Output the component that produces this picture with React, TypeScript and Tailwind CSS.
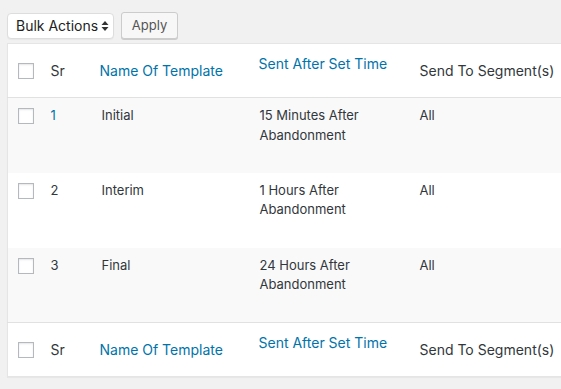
import React from 'react';

const font = { fontFamily: 'Inter, "Liberation Sans", sans-serif' };

interface TemplateRow {
    sr: string;
    name: string;
    sent: [string, string];
    segment: string;
}

const rows: TemplateRow[] = [
    { sr: '1', name: 'Initial', sent: ['15 Minutes After', 'Abandonment'], segment: 'All' },
    { sr: '2', name: 'Interim', sent: ['1 Hours After', 'Abandonment'], segment: 'All' },
    { sr: '3', name: 'Final', sent: ['24 Hours After', 'Abandonment'], segment: 'All' },
];

function Checkbox() {
    return (
        <span className="block w-[16px] h-[16px] bg-white border border-[#b4b9be] shadow-[inset_0_1px_2px_rgba(0,0,0,0.1)]" />
    );
}

function HeadRow({ footer }: { footer?: boolean }) {
    const border = footer ? 'border-t border-[#e1e1e1]' : 'border-b border-[#e1e1e1]';
    return (
        <tr className={`h-[54px] ${border}`}>
            <td className="pl-[10px] align-middle">
                <Checkbox />
            </td>
            <td className="pl-[11px] align-middle text-[14px] text-[#32373c]">Sr</td>
            <td className="pl-[11px] align-middle text-[14px] text-[#0073aa]">Name Of Template</td>
            <td className="pl-[11px] align-middle text-[14px] text-[#0073aa]">
                <span className="relative -top-[7px]">Sent After Set Time</span>
            </td>
            <td className="pl-[11px] align-middle text-[14px] text-[#32373c] whitespace-nowrap">Send To Segment(s)</td>
        </tr>
    );
}

function BulkBar() {
    return (
        <div className="flex items-center gap-[7px]">
            <div className="flex items-center justify-between w-[107px] h-[26px] pl-[8px] pr-[4px] bg-white border border-[#dddddd] rounded-[4px] shadow-[0_1px_1px_rgba(0,0,0,0.04)] text-[14px] text-[#222]">
                <span>Bulk Actions</span>
                <svg width="8" height="12" viewBox="0 0 8 12">
                    <path d="M4 1 L7.5 5 H0.5 Z" fill="#333" />
                    <path d="M4 11 L7.5 7 H0.5 Z" fill="#333" />
                </svg>
            </div>
            <button className="h-[27px] w-[57px] bg-[#f7f7f7] border border-[#cccccc] rounded-[3px] shadow-[0_1px_0_#cccccc] text-[13px] text-[#555]">
                Apply
            </button>
        </div>
    );
}

export default function App() {
    return (
        <div className="w-[561px] h-[389px] overflow-hidden bg-[#f1f1f1] pt-[12px] pl-[7px]" style={font}>
            <BulkBar />
            <table className="mt-[4px] w-[620px] table-fixed border-collapse bg-white border border-[#e5e5e5] shadow-[0_1px_1px_rgba(0,0,0,0.04)]">
                <colgroup>
                    <col className="w-[32px]" />
                    <col className="w-[49px]" />
                    <col className="w-[159px]" />
                    <col className="w-[161px]" />
                    <col />
                </colgroup>
                <thead>
                    <HeadRow />
                </thead>
                <tbody>
                    {rows.map((row, i) => (
                        <tr key={row.sr} className={`h-[75px] ${i % 2 === 0 ? 'bg-[#f9f9f9]' : 'bg-white'}`}>
                            <td className="pl-[10px] pt-[10px] align-top">
                                <Checkbox />
                            </td>
                            <td className={`pl-[11px] pt-[8px] align-top text-[13px] leading-[19.5px] ${i === 0 ? 'text-[#0073aa]' : 'text-[#32373c]'}`}>
                                {row.sr}
                            </td>
                            <td className="pl-[13px] pt-[8px] align-top text-[13px] leading-[19.5px] text-[#32373c]">{row.name}</td>
                            <td className="pl-[12px] pt-[8px] align-top text-[13px] leading-[19.5px] text-[#32373c]">
                                {row.sent[0]}
                                <br />
                                {row.sent[1]}
                            </td>
                            <td className="pl-[11px] pt-[8px] align-top text-[13px] leading-[19.5px] text-[#32373c]">{row.segment}</td>
                        </tr>
                    ))}
                </tbody>
                <tfoot>
                    <HeadRow footer />
                </tfoot>
            </table>
            <div className="mt-[12px]">
                <BulkBar />
            </div>
        </div>
    );
}
